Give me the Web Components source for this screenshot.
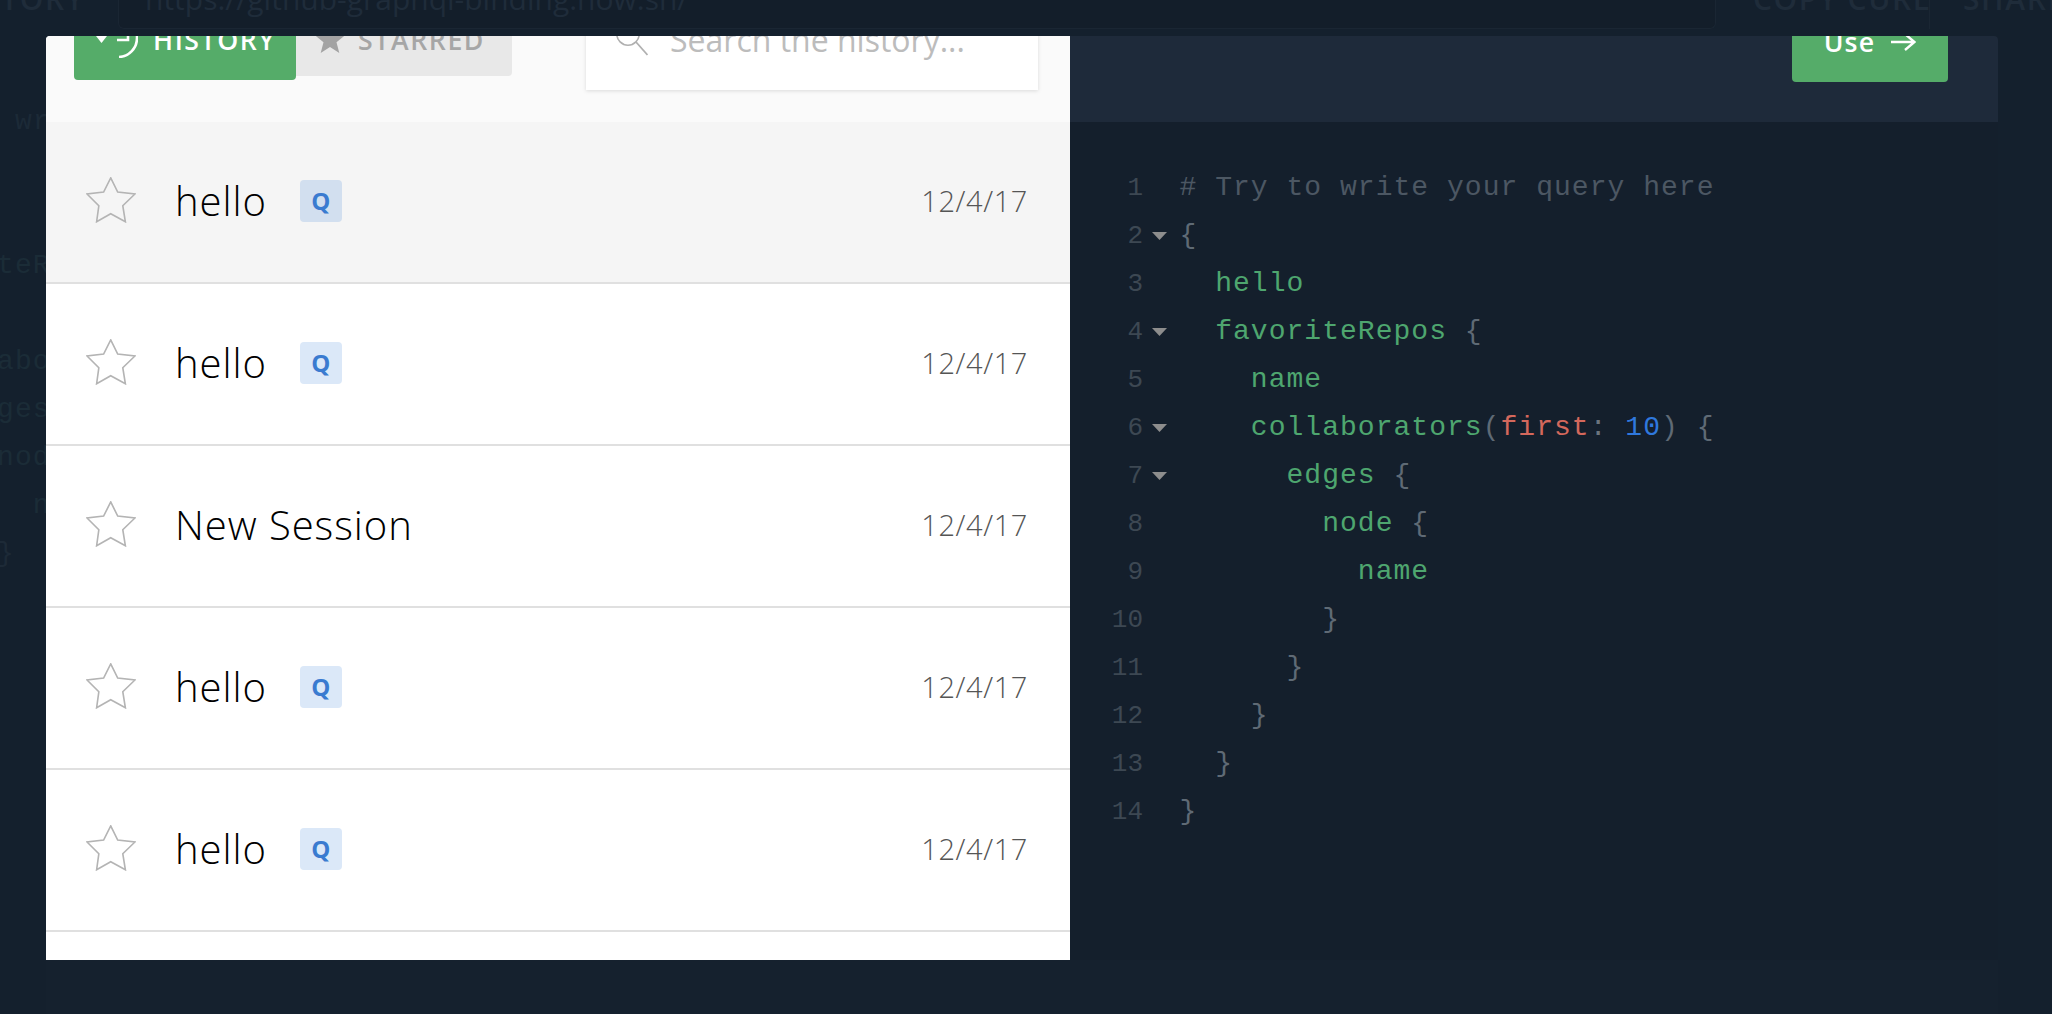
<!DOCTYPE html>
<html lang="en"><head><meta charset="utf-8"><title>History</title>
<style>
html,body{margin:0;height:100%;background:#14202d;overflow:hidden;font-family:"Open Sans",sans-serif}
</style></head><body>
<app-backdrop></app-backdrop>
<history-modal>
  <history-panel slot="left">
    <history-tab slot="tabs" active label="HISTORY" icon="history"></history-tab>
    <history-tab slot="tabs" label="STARRED" icon="star"></history-tab>
    <search-box slot="search" placeholder="Search the history..."></search-box>
    <history-row selected name="hello" badge="Q" date="12/4/17"></history-row>
    <history-row name="hello" badge="Q" date="12/4/17"></history-row>
    <history-row name="New Session" date="12/4/17"></history-row>
    <history-row name="hello" badge="Q" date="12/4/17"></history-row>
    <history-row name="hello" badge="Q" date="12/4/17"></history-row>
    <history-row></history-row>
  </history-panel>
  <preview-panel slot="right"></preview-panel>
</history-modal>
<script>
const CODE=[
 [0,0,[['c','# Try to write your query here']]],
 [1,0,[['p','{']]],
 [0,2,[['k','hello']]],
 [1,2,[['k','favoriteRepos'],['p',' {']]],
 [0,4,[['k','name']]],
 [1,4,[['k','collaborators'],['p','('],['a','first'],['o',': '],['n','10'],['p',') {']]],
 [1,6,[['k','edges'],['p',' {']]],
 [0,8,[['k','node'],['p',' {']]],
 [0,10,[['k','name']]],
 [0,8,[['p','}']]],
 [0,6,[['p','}']]],
 [0,4,[['p','}']]],
 [0,2,[['p','}']]],
 [0,0,[['p','}']]]
];
class CodeBlock extends HTMLElement{
  connectedCallback(){
    const s=this.shadowRoot||this.attachShadow({mode:'open'});
    const rows=CODE.map((l,i)=>{
      const toks=l[2].map(t=>`<span class="${t[0]}">${t[1]}</span>`).join('');
      return `<div class="line"><span class="num">${i+1}</span><span class="fold">${l[0]?'<svg width="15" height="8" viewBox="0 0 15 8"><path d="M0 0H15L7.5 8Z" fill="#8d8d8d"/></svg>':''}</span><span class="txt">${' '.repeat(l[1])}${toks}</span></div>`;
    }).join('');
    s.innerHTML=`<style>
      :host{display:block;font:28px/48px "Liberation Mono",monospace;letter-spacing:1.03px;white-space:pre}
      .line{display:flex;height:48px;align-items:center}
      .num{width:73px;text-align:right;color:#3d4853;letter-spacing:0;font-size:26px;display:var(--gutter,block);flex:none}
      .fold{width:36.5px;flex:none;display:var(--gutter,flex);align-items:center;padding-left:9px;box-sizing:border-box}
      .c{color:var(--c,#4c5763)} .k{color:var(--k,#4ea66f)} .p{color:var(--p,#5f6a75)}
      .a{color:var(--a,#d4685c)} .o{color:var(--p,#6a747e)} .n{color:var(--nn,#2f78dd)}
    </style>${rows}`;
  }
}
customElements.define('code-block',CodeBlock);

class AppBackdrop extends HTMLElement{
  constructor(){super();this.attachShadow({mode:'open'}).innerHTML=`<style>
    :host{display:block;height:1014px;overflow:hidden;position:relative;color:#1f2c3a}
    .top{display:flex;height:29px;font:600 30px/1 "Open Sans",sans-serif}
    .cell{flex:none;height:29px;box-sizing:border-box;white-space:nowrap;line-height:0;display:flex;overflow:hidden}
    .hist{width:118px;justify-content:flex-end;padding-right:33px;letter-spacing:1.6px}
    .url{width:1598px;border-left:1px solid #1a2633;border-right:1px solid #1a2633;border-bottom:1px solid #1a2633;border-radius:0 0 6px 6px;background:#131e2a;padding-left:26px;font-weight:400}
    .copy{margin-left:37px;width:177px;border-right:1px solid #1a2633;letter-spacing:1.6px}
    .share{margin-left:33px;overflow:visible;letter-spacing:1.6px}
    .t{flex:none;transform:translateY(-1px)}
    code-block{margin:69px 0 0 -145.6px;--gutter:none;--c:#1c2a37;--k:#1b2c37;--p:#1d2a37;--a:#1f2b37;--nn:#1b2a3a}
    .panel{position:absolute;left:46px;top:960px;width:1952px;height:54px;background:#15212e}
  </style>
  <div class="top">
    <div class="cell hist"><span class="t">HISTORY</span></div>
    <div class="cell url"><span class="t">https://github-graphql-binding.now.sh/</span></div>
    <div class="cell copy"><span class="t">COPY CURL</span></div>
    <div class="cell share"><span class="t">SHARE</span></div>
  </div>
  <code-block></code-block>
  <div class="panel"></div>`;}
}
customElements.define('app-backdrop',AppBackdrop);

class HistoryModal extends HTMLElement{
  constructor(){super();this.attachShadow({mode:'open'}).innerHTML=`<style>
    :host{display:flex;position:absolute;left:46px;top:36px;width:1952px;height:924px;overflow:hidden;border-radius:4px 4px 0 0}
    ::slotted([slot=left]){width:1024px;flex:none}
    ::slotted([slot=right]){flex:1;min-width:0}
  </style><slot name="left"></slot><slot name="right"></slot>`;}
}
customElements.define('history-modal',HistoryModal);

class HistoryPanel extends HTMLElement{
  constructor(){super();this.attachShadow({mode:'open'}).innerHTML=`<style>
    :host{display:block;background:#fff;overflow:hidden;height:924px}
    header{height:86px;background:#fafafa;display:flex;align-items:flex-start;padding-left:28px;box-sizing:border-box}
    .tabs{display:flex;align-items:flex-start;margin-top:-36px}
    .search{margin-left:74px;margin-top:-36px}
  </style>
  <header><div class="tabs"><slot name="tabs"></slot></div><div class="search"><slot name="search"></slot></div></header>
  <slot></slot>`;}
}
customElements.define('history-panel',HistoryPanel);

class HistoryTab extends HTMLElement{
  connectedCallback(){
    const active=this.hasAttribute('active');
    const icon=this.getAttribute('icon')==='history'
      ?`<svg width="42" height="24" viewBox="0 0 42 24" style="margin-top:12px"><path d="M0 2H11L5.5 9Z" fill="#fff"/><path d="M23 23A19 19 0 0 0 41 4V0M21 6H32V0" fill="none" stroke="#fff" stroke-width="2.6"/></svg>`
      :`<svg width="30" height="29" viewBox="0 0 30 29" style="margin-top:1px"><path d="M15 0L19 10.5L30 11.3L21.5 18.3L24.3 29L15 23L5.7 29L8.5 18.3L0 11.3L11 10.5Z" fill="#a3a3a3"/></svg>`;
    this.attachShadow({mode:'open'}).innerHTML=`<style>
      :host{display:block}
      .tab{box-sizing:border-box;display:flex;align-items:center;white-space:nowrap;
        font:600 26.67px/1 "Open Sans",sans-serif;letter-spacing:1.6px;border-radius:0 4px 4px ${active?'4px':'0'};
        width:${active?222:216}px;height:${active?80:76}px;padding-left:${active?22:19}px;gap:${active?15:13}px;
        background:${active?'#55ac69':'#e8e8e8'};color:${active?'#fff':'#a6a6a6'}}
      .l{position:relative;top:${active?0:2}px}
    </style><div class="tab">${icon}<span class="l">${this.getAttribute('label')}</span></div>`;
  }
}
customElements.define('history-tab',HistoryTab);

class SearchBox extends HTMLElement{
  connectedCallback(){
    this.attachShadow({mode:'open'}).innerHTML=`<style>
      :host{display:block}
      .b{width:452px;height:90px;box-sizing:border-box;background:#fff;box-shadow:0 1px 4px rgba(0,0,0,.13);display:flex;align-items:center;padding-left:30px;gap:22px;white-space:nowrap;
        font:400 32px/1 "Open Sans",sans-serif;color:#bcbcbc}
      svg{flex:none;position:relative;top:-7px}
      span{position:relative;top:-5px}
    </style><div class="b"><svg width="32" height="36" viewBox="0 0 32 36"><circle cx="12" cy="14" r="11.2" fill="none" stroke="#b0b0b0" stroke-width="1.6"/><path d="M20 22L31.5 35" stroke="#b0b0b0" stroke-width="1.8"/></svg><span>${this.getAttribute('placeholder')}</span></div>`;
  }
}
customElements.define('search-box',SearchBox);

class HistoryRow extends HTMLElement{
  connectedCallback(){
    const n=this.getAttribute('name'),b=this.getAttribute('badge'),d=this.getAttribute('date');
    const star=n?`<svg class="star" width="50" height="46" viewBox="-1 -1 52 48"><path d="M24.7 0L32 14.7L50 16.7L37.3 29L40 45.7L24.7 37.3L10 45.7L12.3 29L0 16.7L17.3 14.7Z" fill="none" stroke="#b4b4b4" stroke-width="1.7"/></svg>`:'';
    this.attachShadow({mode:'open'}).innerHTML=`<style>
      :host{display:block}
      .r{box-sizing:border-box;height:162px;border-bottom:2px solid #e0e0e0;display:flex;align-items:center;padding:0 42px 0 40px;background:${this.hasAttribute('selected')?'#f5f5f5':'#fff'}}
      .star{flex:none;margin-top:-4px}
      .name{margin-left:39px;font:300 40px/1 "Open Sans",sans-serif;color:#000;white-space:nowrap;letter-spacing:.95px;margin-top:-2px}
      .badge{margin-left:33px;width:42px;height:42px;border-radius:4px;background:rgba(42,120,214,.17);color:#3a7bd0;font:700 24px/42px "Open Sans",sans-serif;text-align:center;margin-top:-3px}
      .date{margin-left:auto;font:300 29px/1 "Open Sans",sans-serif;color:#555;letter-spacing:.6px;margin-top:-3px}
    </style><div class="r">${star}${n?`<span class="name">${n}</span>`:''}${b?`<span class="badge">${b}</span>`:''}${d?`<span class="date">${d}</span>`:''}</div>`;
  }
}
customElements.define('history-row',HistoryRow);

class PreviewPanel extends HTMLElement{
  constructor(){super();this.attachShadow({mode:'open'}).innerHTML=`<style>
    :host{display:block;background:#141f2c;height:924px;overflow:hidden}
    header{height:86px;background:#1e2a3a;display:flex;justify-content:flex-end;padding-right:50px}
    .use{box-sizing:border-box;width:156px;height:80px;margin-top:-34px;background:#55ac69;border-radius:0 0 4px 4px;color:#fff;font:600 26.67px/1 "Open Sans",sans-serif;letter-spacing:1.2px;display:flex;align-items:center;justify-content:center;gap:16px}
    code-block{margin-top:42px}
  </style>
  <header><div class="use"><span>Use</span><svg width="25" height="18" viewBox="0 0 25 18"><path d="M0 9H23M14 1L23.5 9L14 17" fill="none" stroke="#fff" stroke-width="2.4"/></svg></div></header>
  <code-block></code-block>`;}
}
customElements.define('preview-panel',PreviewPanel);
</script>
</body></html>
